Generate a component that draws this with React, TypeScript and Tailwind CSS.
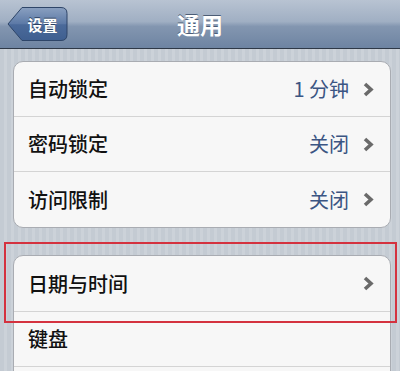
import React from "react";

const Chevron = () => (
  <svg width="11" height="15" viewBox="0 0 11 15" className="shrink-0">
    <polyline points="2,2 8,7.5 2,13" fill="none" stroke="#6a6a6a" strokeWidth="3.6" strokeLinecap="butt" strokeLinejoin="miter" />
  </svg>
);

type RowProps = { label: string; value?: string; last?: boolean };

const Row = ({ label, value, last }: RowProps) => (
  <div className={`flex h-[55px] items-center pl-[14px] pr-[16px] ${last ? "" : "border-b border-[#d4d4d4]"}`}>
    <span className="flex-1 text-[20px] font-medium text-[#111] leading-none">{label}</span>
    {value && <span className="mr-[14px] text-[20px] text-[#3b5583] leading-none">{value}</span>}
    <Chevron />
  </div>
);

export default function App() {
  return (
    <div
      className="relative w-[400px] h-[371px] overflow-hidden bg-[repeating-linear-gradient(90deg,#c4cbd3_0px,#c4cbd3_4px,#ccd2d9_4px,#ccd2d9_7px)]"
      style={{ fontFamily: '"Noto Sans CJK SC", "Noto Sans", sans-serif' }}
    >
      <div className="grid h-[49px] grid-cols-[1fr_auto_1fr] items-center border-b border-[#2f3947] bg-[linear-gradient(180deg,#b8c3d2_0%,#a0afc3_45%,#8396b0_55%,#6e84a2_100%)]">
        <div className="flex items-center pl-[7px]">
          <div className="relative flex h-[36px] w-[61px] items-center justify-center pl-[10px]">
            <svg className="absolute inset-0" width="61" height="36" viewBox="0 0 61 36">
              <defs>
                <linearGradient id="bb" x1="0" y1="0" x2="0" y2="1">
                  <stop offset="0" stopColor="#8aa0c0" />
                  <stop offset="0.5" stopColor="#5c79a6" />
                  <stop offset="0.52" stopColor="#4b6a9a" />
                  <stop offset="1" stopColor="#3f5f90" />
                </linearGradient>
              </defs>
              <path d="M1 18 L15 1.5 H54 Q60 1.5 60 7.5 V28.5 Q60 34.5 54 34.5 H15 Z" fill="url(#bb)" stroke="#2e4568" strokeWidth="1" />
            </svg>
            <span className="relative text-[15px] font-bold text-white leading-none [text-shadow:0_-1px_0_#2a3f60]">设置</span>
          </div>
        </div>
        <div className="text-[23px] font-bold text-white leading-none [text-shadow:0_-1px_0_#4c5d76]">通用</div>
        <div />
      </div>

      <div className="ml-[13px] mt-[12px] w-[378px] overflow-hidden rounded-[10px] border border-[#a9acb2] bg-[#f7f7f7]">
        <Row label="自动锁定" value="1 分钟" />
        <Row label="密码锁定" value="关闭" />
        <Row label="访问限制" value="关闭" last />
      </div>

      <div className="ml-[13px] mt-[27px] w-[378px] overflow-hidden rounded-t-[10px] border border-[#a9acb2] bg-[#f7f7f7]">
        <div className="flex h-[56px] items-center border-b border-[#d4d4d4] pl-[14px] pr-[16px]">
          <span className="flex-1 text-[20px] font-medium text-[#111] leading-none">日期与时间</span>
          <Chevron />
        </div>
        <div className="flex h-[55px] items-center border-b border-[#d4d4d4] pl-[14px] pr-[16px]">
          <span className="flex-1 text-[20px] font-medium text-[#111] leading-none">键盘</span>
        </div>
        <div className="h-[20px]" />
      </div>

      <div className="pointer-events-none absolute left-[4px] top-[242px] h-[81px] w-[393px] border-2 border-[#d4323f]" />
    </div>
  );
}
